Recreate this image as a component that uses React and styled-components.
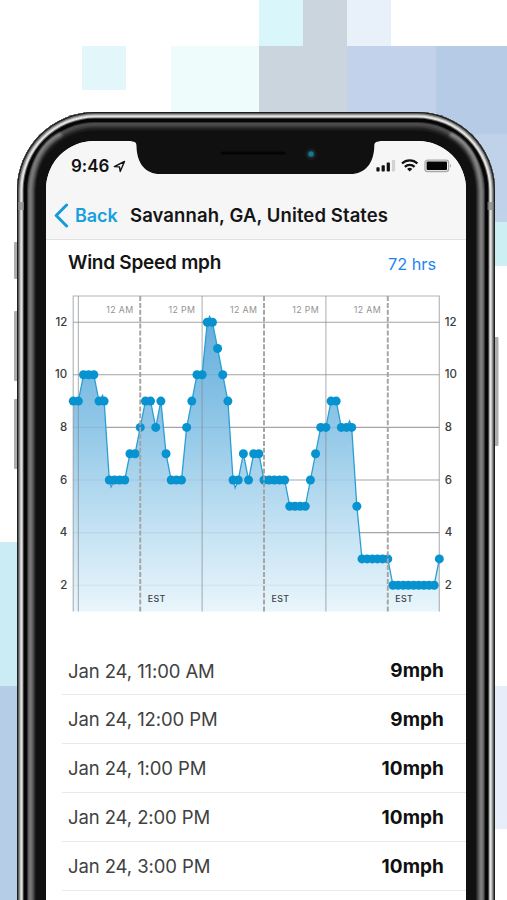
import React from "react";
import styled, { createGlobalStyle } from "styled-components";

const GlobalStyle = createGlobalStyle`
  * { box-sizing: border-box; }
  body {
    margin: 0;
    background: #fff;
    font-family: Inter, "Liberation Sans", sans-serif;
    -webkit-font-smoothing: antialiased;
  }
`;

const Page = styled.main`
  position: relative;
  width: 507px;
  height: 900px;
  overflow: hidden;
  background: #fff;
`;

const Mosaic = styled.svg`
  position: absolute;
  inset: 0;
`;

const Stage = styled.div`
  position: relative;
  display: flex;
  padding: 112px 12.5px 0 14px;
`;

const SideButtons = styled.svg`
  position: absolute;
  left: 0;
  top: 0;
`;

const Phone = styled.div`
  position: relative;
  width: 477.5px;
  height: 900px;
  margin-left: 3px;
  padding: 28.5px;
  border-radius: 78px;
  background: #101010;
  box-shadow:
    inset 0 0 0 1.3px #1c1f1e,
    inset 0 0 0 2.6px #6f7472,
    inset 0 0 0 3.6px #b4b6b4,
    inset 0 0 0 5.6px #e4e2e1,
    inset 0 0 0 6.6px #6a6a6a,
    inset 0 0 0 10px #060606,
    inset 0 0 0 11px #303030,
    inset 0 0 0 13.5px #4c4c4c,
    inset 0 0 0 15.5px #3a3a3a,
    inset 0 0 0 17.5px #232323,
    inset 0 0 0 19px #171717;
`;

const Gleam = styled.svg`
  position: absolute;
  left: 0;
  top: 0;
  pointer-events: none;
`;

const Screen = styled.div`
  position: relative;
  display: flex;
  flex-direction: column;
  height: 872px;
  border-radius: 48px 48px 0 0;
  background: #fff;
  overflow: hidden;
`;

const Notch = styled.svg`
  position: absolute;
  left: 83.5px;
  top: -1px;
`;

const Header = styled.header`
  height: 99.5px;
  background: #f6f6f6;
  border-bottom: 1px solid #e2e2e2;
`;

const StatusBar = styled.div`
  display: flex;
  align-items: center;
  justify-content: space-between;
  height: 50px;
  padding: 1px 14px 0 25.5px;
`;

const Clock = styled.div`
  display: flex;
  align-items: center;
  gap: 4px;
  font-size: 17px;
  font-weight: 600;
  letter-spacing: -0.05px;
  color: #111;
`;

const StatusIcons = styled.svg`
  display: block;
`;

const NavBar = styled.nav`
  display: flex;
  align-items: center;
  height: 49px;
  padding-left: 8.5px;
`;

const BackLink = styled.a`
  display: flex;
  align-items: center;
  gap: 6px;
  width: 76px;
  font-size: 18px;
  font-weight: 600;
  letter-spacing: -0.05px;
  color: #1a9fdd;
`;

const Title = styled.h1`
  margin: 0;
  font-size: 18.5px;
  font-weight: 600;
  letter-spacing: 0.1px;
  white-space: nowrap;
  color: #151515;
`;

const SectionHead = styled.div`
  display: flex;
  align-items: center;
  justify-content: space-between;
  height: 46px;
  padding: 0 30px 1px 22.5px;
`;

const SectionTitle = styled.h2`
  margin: 0;
  font-size: 19px;
  font-weight: 600;
  letter-spacing: -0.25px;
  color: #151515;
`;

const Range = styled.span`
  padding-top: 2px;
  font-size: 16.3px;
  color: #1c84f2;
`;

const Chart = styled.svg`
  display: block;
  flex: none;
  width: 420.5px;
  height: 361px;
`;

const List = styled.ul`
  flex: none;
  margin: 0;
  padding: 0 0 0 16px;
  list-style: none;
`;

const Row = styled.li`
  display: flex;
  align-items: center;
  justify-content: space-between;
  height: 48.9px;
  padding: 1px 22px 0 6.5px;
  border-bottom: 1px solid #e9e9e9;

  &:first-child {
    height: 48px;
    padding-top: 0;
  }
`;

const When = styled.span`
  font-size: 18.5px;
  letter-spacing: -0.1px;
  color: #414141;
`;

const Speed = styled.span`
  font-size: 19px;
  font-weight: 700;
  letter-spacing: 0.05px;
  color: #101010;
`;

const tiles = [
  [82, 46, 44, 44, "#e3f6f9"],
  [171, 46, 88, 88, "#eefcfb"],
  [259, 0, 44, 46, "#d9f6fb"],
  [303, 0, 44, 46, "#cad5dd"],
  [259, 46, 88, 88, "#cad5dd"],
  [347, 0, 44, 46, "#e8f0f9"],
  [347, 46, 89, 88, "#c1d2ea"],
  [436, 46, 71, 88, "#b6cce6"],
  [436, 134, 71, 88, "#c0d2ea"],
  [480, 222, 27, 44, "#cbeff2"],
  [0, 542, 40, 144, "#cbebf5"],
  [0, 686, 40, 214, "#b6cde8"],
  [480, 686, 27, 143, "#e8eef9"],
];

const speeds = [
  9, 9, 10, 10, 10, 9, 9, 6, 6, 6, 6, 7, 7, 8, 9, 9, 8, 9, 7, 6, 6, 6, 8, 9,
  10, 10, 12, 12, 11, 10, 9, 6, 6, 7, 6, 7, 7, 6, 6, 6, 6, 6, 5, 5, 5, 5, 6, 7,
  8, 8, 9, 9, 8, 8, 8, 5, 3, 3, 3, 3, 3, 3, 2, 2, 2, 2, 2, 2, 2, 2, 2, 3,
];

// Small overshoots of the smoothed line between hourly samples.
const overshoots = [[5.7, 9.22], [7.35, 5.74], [26.45, 12.22], [31.4, 5.7], [53.6, 8.24]];

const px = (hour) => 73.4 + hour * 5.157;
const py = (speed) => 637.8 - speed * 26.3;

const line = [...speeds.map((s, i) => [i, s]), ...overshoots]
  .sort((a, b) => a[0] - b[0])
  .map(([h, s]) => `${px(h).toFixed(2)},${py(s).toFixed(2)}`)
  .join(" L");

const ticks = [2, 4, 6, 8, 10, 12];
const midnights = [13, 37, 61];
const noons = [1, 25, 49];

const rows = [
  ["Jan 24, 11:00 AM", "9mph"],
  ["Jan 24, 12:00 PM", "9mph"],
  ["Jan 24, 1:00 PM", "10mph"],
  ["Jan 24, 2:00 PM", "10mph"],
  ["Jan 24, 3:00 PM", "10mph"],
];

function WindChart() {
  return (
    <Chart viewBox="46.2 286 420.5 361">
      <defs>
        <linearGradient id="wind" gradientUnits="userSpaceOnUse" x1="0" x2="0" y1="322" y2="612">
          <stop offset="0" stopColor="#4ba2d7" />
          <stop offset="0.36" stopColor="#7fbee4" />
          <stop offset="0.7" stopColor="#b8dcf0" />
          <stop offset="1" stopColor="#e6f4fb" />
        </linearGradient>
      </defs>
      <g stroke="#a5a5a5" strokeWidth="1.1">
        {ticks.map((t) => <line key={t} x1="73.4" x2="439.5" y1={py(t)} y2={py(t)} />)}
      </g>
      <path d={`M${px(0)},611.5 L${line} L${px(71)},611.5 Z`} fill="url(#wind)" fillOpacity="0.86" />
      <g stroke="#858b90" strokeOpacity="0.65" strokeWidth="1.1" fill="none">
        <path d="M73.4 611.5V296H439.5V611.5" />
        {noons.map((h) => <line key={h} x1={px(h)} x2={px(h)} y1="296" y2="611.5" />)}
      </g>
      <path d={`M${line}`} fill="none" stroke="#2b9fd4" strokeWidth="1.3" />
      {speeds.map((s, i) => <circle key={i} cx={px(i)} cy={py(s)} r="4.5" fill="#0792d0" />)}
      <g stroke="#a3a3a3" strokeWidth="1.9" strokeDasharray="5 1.9">
        {midnights.map((h) => <line key={h} x1={px(h)} x2={px(h)} y1="296" y2="611.5" />)}
      </g>
      <g fontSize="11.5" fontWeight="500" fill="#3c3c3c">
        {ticks.map((t) => (
          <React.Fragment key={t}>
            <text x="67.500" y={py(t) + 3.6} textAnchor="end">{t}</text>
            <text x="445" y={py(t) + 3.6}>{t}</text>
          </React.Fragment>
        ))}
      </g>
      <g fontSize="8.8" fill="#939393" textAnchor="end" letterSpacing="0.35">
        {[13, 25, 37, 49, 61].map((h, i) => (
          <text key={h} x={px(h) - 6.8} y="313">{i % 2 ? "12 PM" : "12 AM"}</text>
        ))}
      </g>
      <g fontSize="8.8" fontWeight="500" fill="#3a4045" letterSpacing="0.35">
        {midnights.map((h) => <text key={h} x={px(h) + 7.6} y="602">EST</text>)}
      </g>
    </Chart>
  );
}

function StatusGlyphs() {
  return (
    <StatusIcons width="76" height="14" viewBox="0 0 76 14">
      <g fill="#111">
        <rect x="0.4" y="8.2" width="3.2" height="4.3" rx="0.8" />
        <rect x="5.6" y="6.2" width="3.2" height="6.3" rx="0.8" />
        <rect x="10.7" y="3.6" width="3.2" height="8.9" rx="0.8" />
        <rect x="15.9" y="1" width="3.2" height="11.5" rx="0.8" fill="#d2d2d2" />
      </g>
      <g fill="none" stroke="#111" strokeWidth="2.3">
        <path d="M26 4.500A11.300 11.300 0 0 1 41.400 4.500" />
        <path d="M28.800 7.800A7.200 7.200 0 0 1 38.600 7.800" />
      </g>
      <path d="M31.100 9.900A4 4 0 0 1 36.300 9.900L33.700 12.600Z" fill="#111" />
      <rect x="49" y="1.100" width="23.600" height="11.400" rx="2.600" fill="#f6f6f6" stroke="#a8a8a8" strokeWidth="1.300" />
      <rect x="50.600" y="2.600" width="20.400" height="8.400" rx="1" fill="#050505" />
      <path d="M74 4.800Q76.200 6.800 74 8.800Z" fill="#aaa" />
    </StatusIcons>
  );
}

export default function App() {
  return (
    <>
      <GlobalStyle />
      <Page>
        <Mosaic width="507" height="900">
          {tiles.map(([x, y, w, h, fill], i) => (
            <rect key={i} x={x} y={y} width={w} height={h} fill={fill} />
          ))}
        </Mosaic>
        <Stage>
          <SideButtons width="507" height="900" fill="#adadad">
            <rect x="14" y="242" width="4" height="37" rx="1" />
            <rect x="14" y="311" width="4" height="70" rx="1" />
            <rect x="14" y="399" width="4" height="70" rx="1" />
            <rect x="493" y="337" width="5.500" height="109" rx="1" />
          </SideButtons>
          <Phone>
            <Gleam width="477.500" height="788" viewBox="17 112 477.500 788">
              <defs>
                <filter id="soften" x="-20%" y="-5%" width="140%" height="110%">
                  <feGaussianBlur stdDeviation="0.8" />
                </filter>
              </defs>
              <g fill="none" strokeLinecap="round" filter="url(#soften)">
                <path d="M60 135C43 144 33 162 31.500 190V910" stroke="#5c5c5c" strokeWidth="5" />
                <path d="M60 134C42 143 31.500 162 30 190V910" stroke="#8c8c8c" strokeWidth="2" />
                <path d="M451.500 135C468.500 144 478.500 162 480 190V910" stroke="#5c5c5c" strokeWidth="5" />
                <path d="M451.500 134C469.500 143 480 162 481.500 190V910" stroke="#9a9a9a" strokeWidth="2" />
              </g>
              <g fill="#8a8a88" fillOpacity="0.75">
                <rect x="18" y="202" width="6" height="8" />
                <rect x="487.500" y="202" width="6" height="8" />
              </g>
            </Gleam>
            <Screen>
              <Header>
                <StatusBar>
                  <Clock>
                    9:46
                    <svg width="13" height="13" viewBox="0 0 13 13">
                      <path d="M1.300 6.600L11.500 1.500L7.200 11.500L6.500 6.900Z" fill="none" stroke="#111" strokeWidth="1.400" strokeLinejoin="round" />
                    </svg>
                  </Clock>
                  <StatusGlyphs />
                </StatusBar>
                <NavBar>
                  <BackLink>
                    <svg width="15" height="25" viewBox="0 0 15 25">
                      <path d="M12.600 2L2.200 12.500L12.600 23" fill="none" stroke="#149bd8" strokeWidth="3" strokeLinecap="round" strokeLinejoin="round" />
                    </svg>
                    Back
                  </BackLink>
                  <Title>Savannah, GA, United States</Title>
                </NavBar>
              </Header>
              <Notch width="252" height="36" viewBox="129.500 139.500 252 36">
                <path d="M132 139V141C135.500 141 137 142 137 145.500C137.300 163 146 173.500 160.500 173.500H351C365.500 173.500 374.500 163 374.800 145.500C374.800 142 376.500 141 380 141V139Z" fill="#101010" />
                <rect x="221" y="151" width="65" height="3" rx="1.500" fill="#040404" />
                <circle cx="311.500" cy="153.500" r="6" fill="#1a1a1a" />
                <circle cx="311.500" cy="153.500" r="3.600" fill="#0c4654" />
                <circle cx="311.500" cy="153.500" r="2.500" fill="#137a8c" />
              </Notch>
              <SectionHead>
                <SectionTitle>Wind Speed mph</SectionTitle>
                <Range>72 hrs</Range>
              </SectionHead>
              <WindChart />
              <List>
                {rows.map(([when, speed]) => (
                  <Row key={when}>
                    <When>{when}</When>
                    <Speed>{speed}</Speed>
                  </Row>
                ))}
              </List>
            </Screen>
          </Phone>
        </Stage>
      </Page>
    </>
  );
}
